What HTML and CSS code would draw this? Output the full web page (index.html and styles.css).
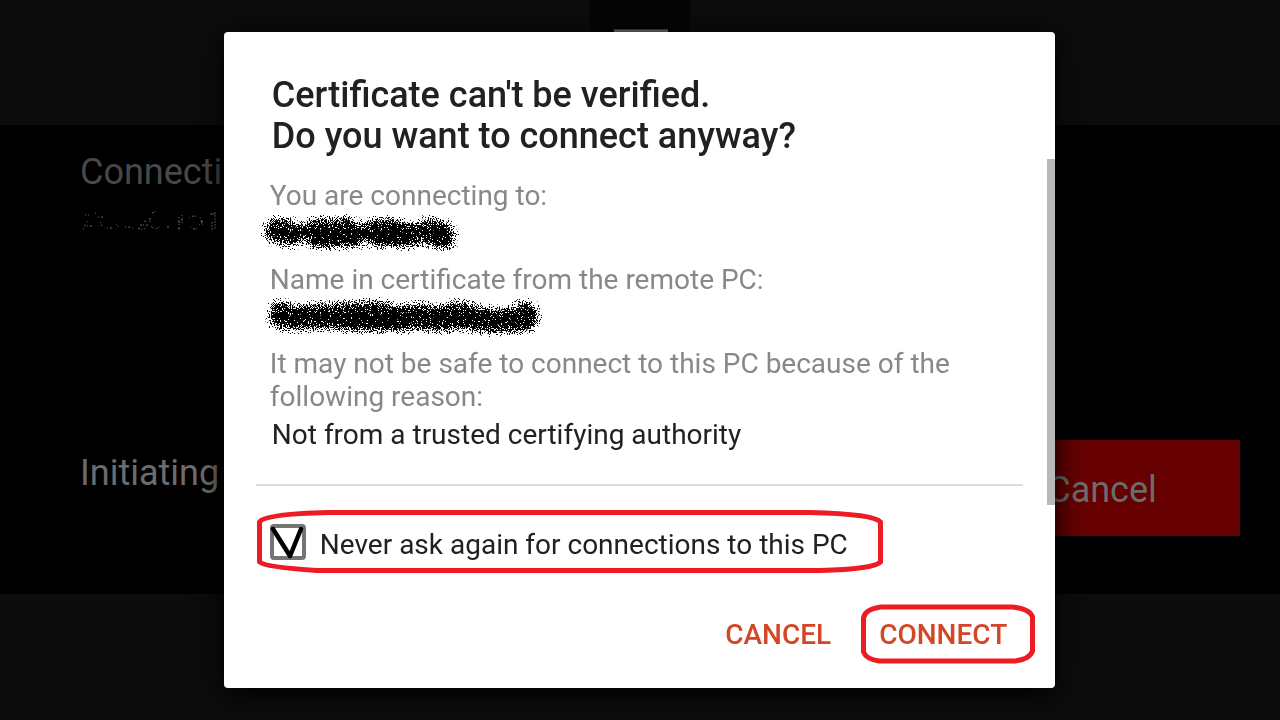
FILE: index.html
```
<!DOCTYPE html>
<html lang="en">
<head>
  <meta charset="UTF-8">
  <meta name="viewport" content="width=device-width, initial-scale=1">
  <title>Certificate can't be verified</title>
  <link rel="stylesheet" href="styles.css">
</head>
<body>

  <div class="screen">
    <div class="icon-tile"><span></span></div>
    <div class="connection">
      <div>
        <h2>Connecting</h2>
        <svg class="host" width="138" height="24" viewBox="0 0 138 24" fill="none" stroke="#666" aria-hidden="true">
          <path stroke-dasharray="1 2 2 3" d="M3 20l5-9M5 6h4M7 17h7M15 4l2 1M20 13l2 4M18 8h5M27 19h6M36 15l3 3M45 18h8M52 19l2 1"/>
          <path stroke-dasharray="2 1 1 2" d="M58 19q6 3 8-1M60 16h8M64 12l2 1M72 4l5-2M70 9v6M71 17q5 5 9 0M87 18h3"/>
          <path stroke-dasharray="1 2 3 1" d="M99 8v13M102 6v8M109 9q6-4 8 0M110 18q6 4 8 0M120 8l3 9M119 16l4-4M130 5h5"/>
          <path stroke-dasharray="2 1" d="M132 4v3M132 13v8M135 3v18"/>
        </svg>
      </div>
      <div class="status">
        <p>Initiating</p>
        <button class="stop" type="button">Cancel</button>
      </div>
    </div>
  </div>

  <div class="overlay">
    <div class="dialog" role="dialog" aria-labelledby="title">
      <h1 id="title">Certificate can't be verified.<br>Do you want to connect anyway?</h1>

      <div class="content">
        <p>You are connecting to:</p>
        <svg class="scribble" width="280" height="40" viewBox="0 0 280 40" aria-hidden="true">
          <defs>
            <filter id="spray" filterUnits="userSpaceOnUse" x="-10" y="-10" width="300" height="60" color-interpolation-filters="sRGB">
              <feGaussianBlur in="SourceAlpha" stdDeviation="4" result="soft"/>
              <feTurbulence type="fractalNoise" baseFrequency="0.9" numOctaves="2" seed="4" result="noise"/>
              <feComposite in="soft" in2="noise" operator="arithmetic" k2="1" k3="2.4" k4="-1.65" result="mix"/>
              <feComponentTransfer in="mix" result="dots">
                <feFuncA type="linear" slope="14" intercept="-1"/>
              </feComponentTransfer>
              <feFlood flood-color="#000" result="ink"/>
              <feComposite in="ink" in2="dots" operator="in" result="inked"/>
              <feMorphology in="SourceAlpha" operator="dilate" radius="4" result="area"/>
              <feComposite in="inked" in2="area" operator="in"/>
            </filter>
          </defs>
          <path filter="url(#spray)" d="M11 19q10 0 14 3M48 20l15-1M52 24h14M80 18l5 6M72 21h14M107 20l20-1M112 22l32 1M163 19l12 2M164 20l13 5"/>
        </svg>

        <p>Name in certificate from the remote PC:</p>
        <svg class="scribble" width="280" height="40" viewBox="0 0 280 40" aria-hidden="true">
          <path filter="url(#spray)" d="M15 18l1 3M28 22l28-2M56 21l30-2M76 21l34-4l18 5M86 23h46M132 23l22-3l16 3M170 22h18M190 18l16 4M206 22l20 3l22-1M259 18l1 5"/>
        </svg>

        <p>It may not be safe to connect to this PC because of the following reason:</p>
        <p class="reason">Not from a trusted certifying authority</p>
        <hr>

        <div class="remember">
          <span class="check">
            <input type="checkbox" id="never-ask" checked>
            <svg width="36" height="36" viewBox="0 0 36 36" aria-hidden="true">
              <path d="M3 5l17 27L31 5" fill="none" stroke="#000" stroke-width="4.500" stroke-linecap="round" stroke-linejoin="round"/>
            </svg>
          </span>
          <label for="never-ask">Never ask again for connections to this PC</label>
          <svg class="ring" viewBox="0 0 628 64" preserveAspectRatio="none" aria-hidden="true">
            <path d="M3.500 12Q8 4 73 2.500H554Q618 4 624.500 12V52Q618 59 564 60.500H61Q9 57 3.500 52Z"/>
          </svg>
        </div>
        <span class="scrollbar"></span>
      </div>

      <div class="actions">
        <button type="button">CANCEL</button>
        <button type="button">CONNECT
          <svg class="ring" viewBox="0 0 174 60" preserveAspectRatio="none" aria-hidden="true">
            <path d="M2.500 14Q4 5 20 3H152Q169 5 171.500 13V47Q169 55 154 57H18Q5 55 2.500 48Z"/>
          </svg>
        </button>
      </div>
    </div>
  </div>

</body>
</html>
```
FILE: styles.css
```
* {
  box-sizing: border-box;
}

body {
  margin: 0;
  font-family: Roboto, "Liberation Sans", sans-serif;
  background: #0c0c0c;
  overflow: hidden;
}

h1, h2, p {
  margin: 0;
}

button {
  border: 0;
  padding: 0;
  font-family: inherit;
  cursor: pointer;
}

/* connection screen behind the dialog */
.screen {
  height: 100vh;
  display: flex;
  flex-direction: column;
  padding-bottom: 126px;
}

.icon-tile {
  width: 100px;
  height: 125px;
  margin: 0 auto;
  padding: 29px 22px 0 24px;
  background: #050505;
}

.icon-tile span {
  display: block;
  height: 54px;
  background: #707070;
  border-top: 1px solid #443f40;
}

.connection {
  flex: 1;
  display: flex;
  flex-direction: column;
  justify-content: space-between;
  padding: 26px 40px 58px 80px;
  background: #000;
}

.connection h2,
.connection p,
.stop {
  font-size: 36px;
  line-height: 42px;
  font-weight: 400;
}

.connection h2 {
  color: #484848;
}

.host {
  display: block;
  margin-top: 16px;
}

.status {
  display: flex;
  justify-content: space-between;
  align-items: flex-start;
}

.status p {
  color: #6c6c6c;
  padding-top: 12px;
}

.stop {
  width: 276px;
  height: 96px;
  padding-top: 4px;
  background: #600;
  color: #6c6c6c;
}

/* dialog */
.overlay {
  position: fixed;
  inset: 0;
  display: flex;
  align-items: center;
  justify-content: center;
  padding-right: 1px;
}

.dialog {
  width: 65%;
  padding-top: 43px;
  background: #fff;
  border-radius: 4px;
  box-shadow: 0 6px 28px #000;
  color: #212121;
}

.dialog h1 {
  padding: 0 48px;
  font-size: 36px;
  line-height: 41px;
  font-weight: 500;
}

.content {
  position: relative;
  padding: 22px 32px 0;
  font-size: 28px;
  line-height: 33px;
}

.content p {
  padding: 0 14px;
  color: #888;
}

.content .reason {
  padding: 5px 16px 0;
  color: #212121;
}

.scribble {
  display: block;
  margin: 0 10px 11px;
  overflow: visible;
  fill: none;
  stroke: #000;
  stroke-width: 24;
  stroke-linecap: round;
  stroke-linejoin: round;
}

hr {
  margin: 33px 0 24px;
  border: 0;
  border-top: 2px solid #dcdcdc;
}

.remember {
  position: relative;
  display: flex;
  align-items: center;
  gap: 14px;
  height: 64px;
  width: 628px;
  padding-left: 14px;
}

.remember label {
  padding-top: 4px;
}

.check {
  position: relative;
  width: 36px;
  height: 36px;
}

.check input {
  appearance: none;
  display: block;
  width: 36px;
  height: 36px;
  margin: 0;
  border: 4px solid #757575;
  border-radius: 4px;
}

.check svg {
  position: absolute;
  inset: 0;
  display: none;
  pointer-events: none;
}

.check input:checked + svg {
  display: block;
}

.ring {
  position: absolute;
  inset: 0;
  width: 100%;
  height: 100%;
  fill: none;
  stroke: #ed1c24;
  stroke-width: 5;
  stroke-linejoin: round;
  pointer-events: none;
}

.scrollbar {
  position: absolute;
  top: 2px;
  right: 0;
  width: 8px;
  height: 346px;
  background: #b8b8b8;
}

.actions {
  display: flex;
  justify-content: flex-end;
  gap: 12px;
  padding: 30px 20px 24px;
}

.actions button {
  position: relative;
  height: 60px;
  padding: 0 18px;
  background: none;
  color: #d24726;
  font-size: 28px;
  font-weight: 500;
}

.actions button:last-child {
  width: 174px;
  text-align: left;
}
```
